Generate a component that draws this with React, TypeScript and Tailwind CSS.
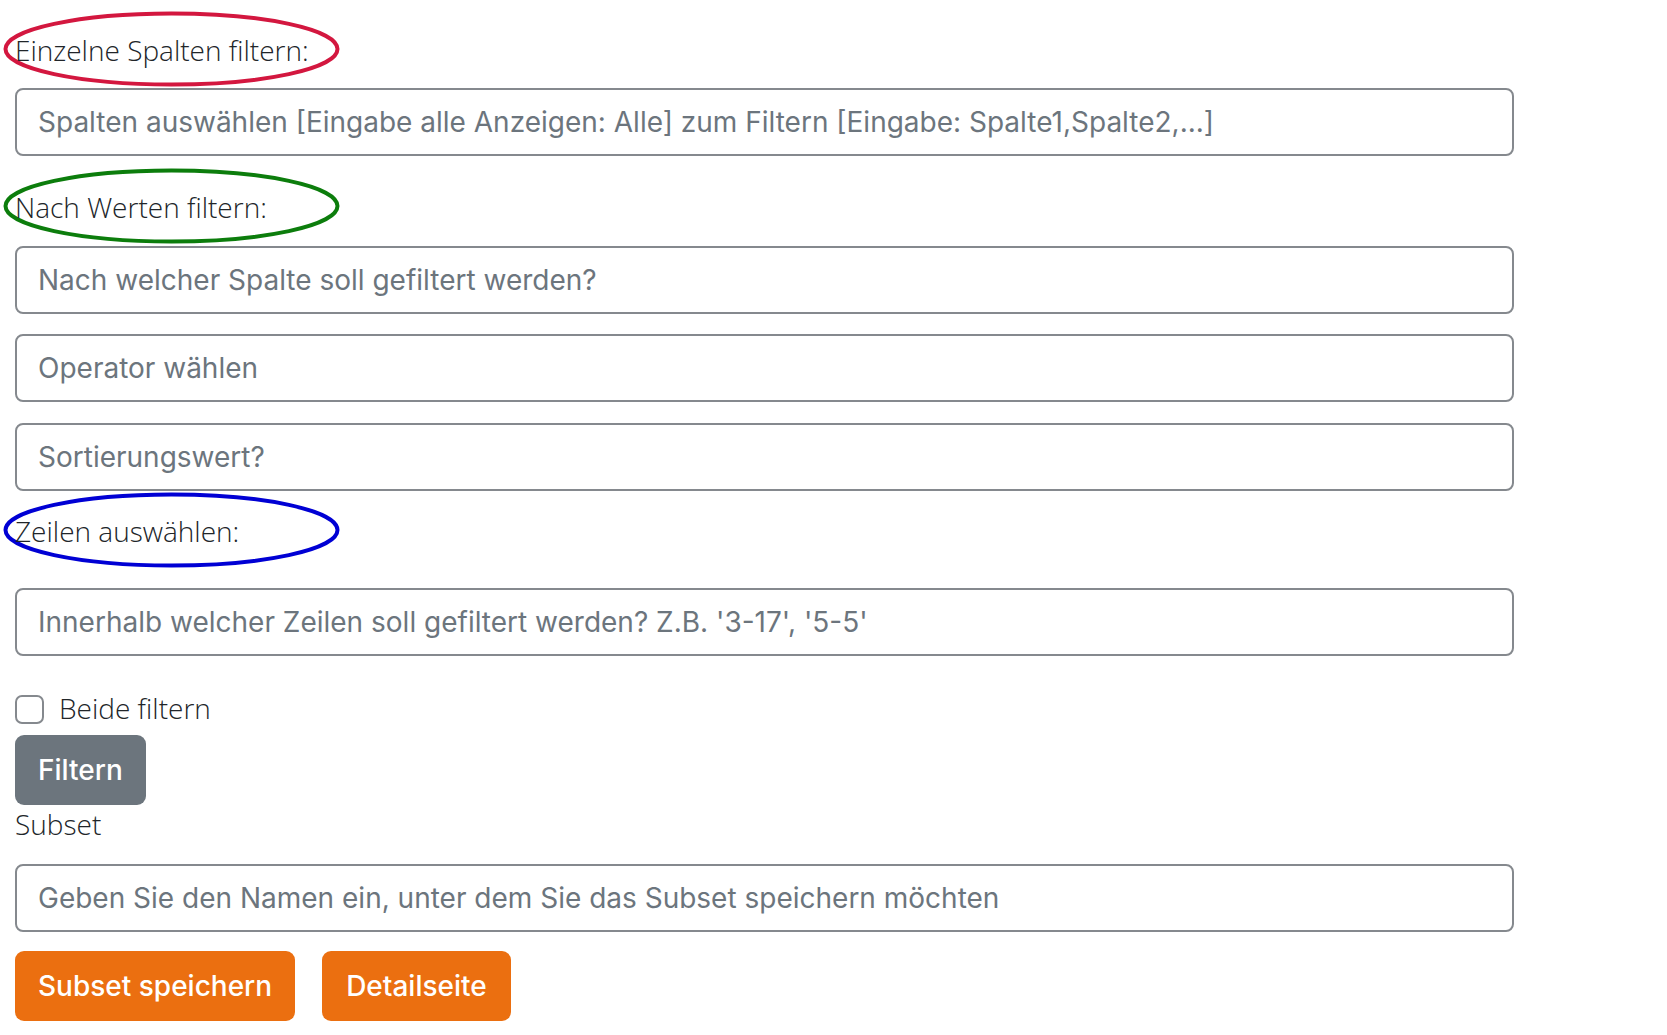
import { FC, ReactNode } from 'react';

const font = { fontFamily: 'Inter, "Liberation Sans", sans-serif' };
const lightFont = { fontFamily: '"Open Sans", Roboto, sans-serif' };

const Ring: FC<{ color: string }> = ({ color }) => (
  <svg
    className="pointer-events-none absolute left-[-12px] top-[-20px] h-[76px] w-[337px]"
    viewBox="0 0 337 76"
  >
    <ellipse cx="168.5" cy="38" rx="166" ry="35.5" fill="none" stroke={color} strokeWidth="4" />
  </svg>
);

const Label: FC<{ children: ReactNode; ring?: string; className?: string }> = ({ children, ring, className = '' }) => (
  <div
    className={`relative h-[42px] text-[28px] leading-[42px] font-light text-[#212529] ${className}`}
    style={lightFont}
  >
    {ring && <Ring color={ring} />}
    <span className="relative top-[-2px]">{children}</span>
  </div>
);

const Field: FC<{ placeholder: string; className?: string }> = ({ placeholder, className = '' }) => (
  <input
    type="text"
    placeholder={placeholder}
    className={`block h-[68px] w-[1499px] rounded-[8px] border-2 border-[#85898e] bg-white px-[21px] text-[28px] text-[#212529] placeholder:text-[#6c757d] outline-none ${className}`}
  />
);

export default function App() {
  return (
    <div className="min-h-screen bg-white px-[15px] pt-[31px]" style={font}>
      <Label ring="#d3173f">Einzelne Spalten filtern:</Label>
      <Field
        className="mt-[15px]"
        placeholder="Spalten auswählen [Eingabe alle Anzeigen: Alle] zum Filtern [Eingabe: Spalte1,Spalte2,...]"
      />

      <Label ring="#0c7d0c" className="mt-[32px]">Nach Werten filtern:</Label>
      <Field className="mt-[16px]" placeholder="Nach welcher Spalte soll gefiltert werden?" />
      <Field className="mt-[20px]" placeholder="Operator wählen" />
      <Field className="mt-[21px]" placeholder="Sortierungswert?" />

      <Label ring="#0000d4" className="mt-[21px]">Zeilen auswählen:</Label>
      <Field
        className="mt-[34px]"
        placeholder="Innerhalb welcher Zeilen soll gefiltert werden? Z.B. '3-17', '5-5'"
      />

      <label
        className="mt-[32px] flex h-[42px] items-center gap-[15px] text-[28px] font-light text-[#212529]"
        style={lightFont}
      >
        <input
          type="checkbox"
          className="h-[29px] w-[29px] appearance-none rounded-[7px] border-2 border-[#85898e] bg-white"
        />
        <span className="relative top-[-1px]">Beide filtern</span>
      </label>

      <button className="mt-[5px] block h-[70px] rounded-[9px] bg-[#6c757d] px-[23px] text-[28px] font-medium text-white">
        Filtern
      </button>

      <Label>Subset</Label>
      <Field
        className="mt-[17px]"
        placeholder="Geben Sie den Namen ein, unter dem Sie das Subset speichern möchten"
      />

      <div className="mt-[19px] flex gap-[27px]">
        <button className="h-[70px] rounded-[9px] bg-[#eb6f10] px-[23px] text-[28px] font-medium text-white">
          Subset speichern
        </button>
        <button className="h-[70px] rounded-[9px] bg-[#eb6f10] px-[24px] text-[28px] font-medium text-white">
          Detailseite
        </button>
      </div>
    </div>
  );
}
